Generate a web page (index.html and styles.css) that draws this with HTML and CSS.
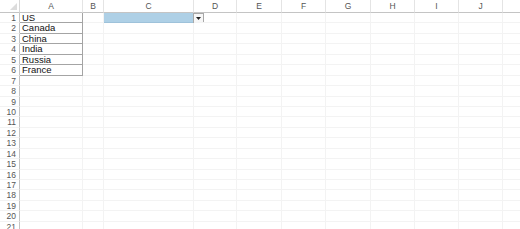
FILE: index.html
```html
<!DOCTYPE html>
<html lang="en">
<head>
    <meta charset="UTF-8">
    <meta name="viewport" content="width=device-width, initial-scale=1.0">
    <title>Sheet1</title>
    <link rel="stylesheet" href="styles.css">
</head>
<body>

    <div class="sheet" id="sheet"></div>

    <script>
        const columns = ['A', 'B', 'C', 'D', 'E', 'F', 'G', 'H', 'I', 'J', ''];
        const values = { 'A1': 'US', 'A2': 'Canada', 'A3': 'China', 'A4': 'India', 'A5': 'Russia', 'A6': 'France' };
        const sheet = document.getElementById('sheet');

        // corner with the little select-all triangle
        const corner = document.createElement('div');
        corner.className = 'corner';
        corner.innerHTML = '<svg width="7" height="7" viewBox="0 0 7 7"><polygon points="7,0 7,7 0,7" fill="#dcdcdc"/></svg>';
        sheet.appendChild(corner);

        columns.forEach(function (col) {
            const head = document.createElement('div');
            head.className = 'col-head';
            head.textContent = col;
            sheet.appendChild(head);
        });

        for (let row = 1; row <= 21; row++) {
            const head = document.createElement('div');
            head.className = 'row-head';
            head.textContent = row;
            sheet.appendChild(head);

            columns.forEach(function (col, i) {
                const ref = col + row;
                const cell = document.createElement('div');
                cell.className = 'cell';
                if (values[ref] !== undefined) {
                    cell.textContent = values[ref];
                    cell.classList.add('boxed');
                }
                if (ref === 'C1') {
                    cell.classList.add('picked');
                    const drop = document.createElement('span');
                    drop.className = 'dropdown';
                    drop.innerHTML = '<svg width="5" height="3" viewBox="0 0 5 3"><polygon points="0,0 5,0 2.5,3" fill="#222"/></svg>';
                    cell.appendChild(drop);
                }
                sheet.appendChild(cell);
            });
        }
    </script>

</body>
</html>
```

FILE: styles.css
```css
body {
    margin: 0;
    background-color: #fff;
    font-family: "Liberation Sans", Arial, sans-serif;
    overflow: hidden;
}

.sheet {
    display: grid;
    grid-template-columns: 20px 63px 21px 90px 43px 45px 44px 45px 44px 44px 44px 40px;
    grid-template-rows: 13px repeat(21, 10.45px);
    width: 520px;
    height: 229px;
    overflow: hidden;
}

.corner {
    display: flex;
    align-items: flex-end;
    justify-content: flex-end;
    padding: 0 2px 2px 0;
    border-right: 1px solid #d8d8d8;
    border-bottom: 1px solid #c4c4c4;
    box-sizing: border-box;
}

.col-head {
    font-size: 8.5px;
    color: #555;
    text-align: center;
    line-height: 13px;
    border-right: 1px solid #e4e4e4;
    border-bottom: 1px solid #c4c4c4;
    box-sizing: border-box;
}

.row-head {
    font-size: 8.5px;
    color: #555;
    text-align: right;
    padding-right: 3px;
    line-height: 10.45px;
    border-right: 1px solid #c4c4c4;
    border-bottom: 1px solid #f2f2f2;
    box-sizing: border-box;
}

.cell {
    position: relative;
    font-size: 9.5px;
    color: #111;
    line-height: 10.45px;
    padding-left: 2px;
    white-space: nowrap;
    border-right: 1px solid #f3f3f3;
    border-bottom: 1px solid #f3f3f3;
    box-sizing: border-box;
}

.boxed {
    border-right-color: #a4a4a4;
    border-bottom-color: #a4a4a4;
}

.picked {
    background-color: #aed0e6;
    border-right-color: #aed0e6;
    border-bottom-color: #9ec2da;
}

.dropdown {
    position: absolute;
    left: 89px;
    top: 0;
    width: 11px;
    height: 10px;
    display: flex;
    align-items: center;
    justify-content: center;
    background-color: #f7f7f7;
    border: 1px solid #a8a8a8;
    box-sizing: border-box;
}
```
